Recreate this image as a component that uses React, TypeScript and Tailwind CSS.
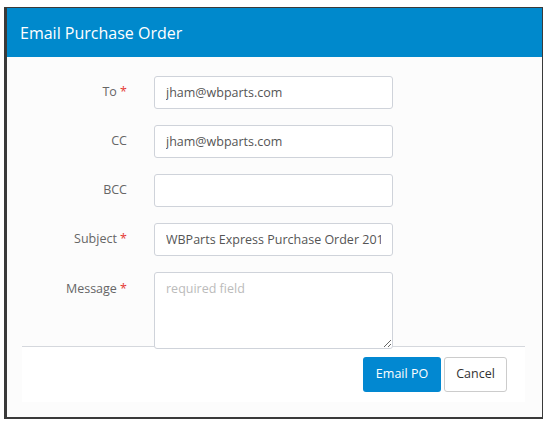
const font = { fontFamily: '"Open Sans", "Liberation Sans", sans-serif' }

export default function App() {
  return (
    <div className="w-[550px] h-[425px] bg-white pt-[7px] pl-[4px]" style={font}>
      <div className="w-[539px] h-[412px] flex flex-col bg-[#fcfcfc] border-[#3a3a3a] border-l-[3px] border-t border-r border-b-2">
        {/* Header */}
        <div className="h-[49px] flex-none flex items-center px-[13px] bg-[#0089cc]">
          <h2 className="text-[16px] text-white">Email Purchase Order</h2>
        </div>

        {/* Form */}
        <div className="relative z-10 pt-[19px] flex flex-col gap-4">
          <Row label="To" required value="jham@wbparts.com" />
          <Row label="CC" value="jham@wbparts.com" />
          <Row label="BCC" value="" />
          <Row label="Subject" required value="WBParts Express Purchase Order 2019-0042" />
          <div className="flex items-start gap-[27px]">
            <label className="w-[120px] pt-[8px] text-right text-[12.5px] text-[#666]">
              Message <span className="text-[#e53935]">*</span>
            </label>
            <textarea
              className="w-[239px] h-[77px] px-[11px] py-[7px] text-[12.5px] text-[#555] placeholder:text-[#bbb] bg-white border border-[#cfd3da] rounded-[3px] outline-none"
              placeholder="required field"
            />
          </div>
        </div>

        {/* Footer */}
        <div className="-mt-[3px] mx-[15px] w-[503px] flex justify-end gap-[3px] pt-[10px] pb-[10px] pr-[18px] bg-white border-t border-[#d5d8dd]">
          <button className="h-[35px] w-[78px] rounded-[3px] bg-[#0288d1] text-white text-[12.5px]">Email PO</button>
          <button className="h-[35px] w-[63px] rounded-[3px] bg-white border border-[#cccccc] text-[#333] text-[12.5px]">Cancel</button>
        </div>
      </div>
    </div>
  )
}

function Row(props: { label: string, value: string, required?: boolean }) {
  return (
    <div className="flex items-center gap-[27px]">
      <label className="w-[120px] text-right text-[12.5px] text-[#666]">
        {props.label}{props.required && <span className="text-[#e53935]"> *</span>}
      </label>
      <input
        className="w-[239px] h-[33px] px-[11px] text-[12.5px] text-[#555] bg-white border border-[#cfd3da] rounded-[3px] outline-none"
        defaultValue={props.value}
      />
    </div>
  )
}
